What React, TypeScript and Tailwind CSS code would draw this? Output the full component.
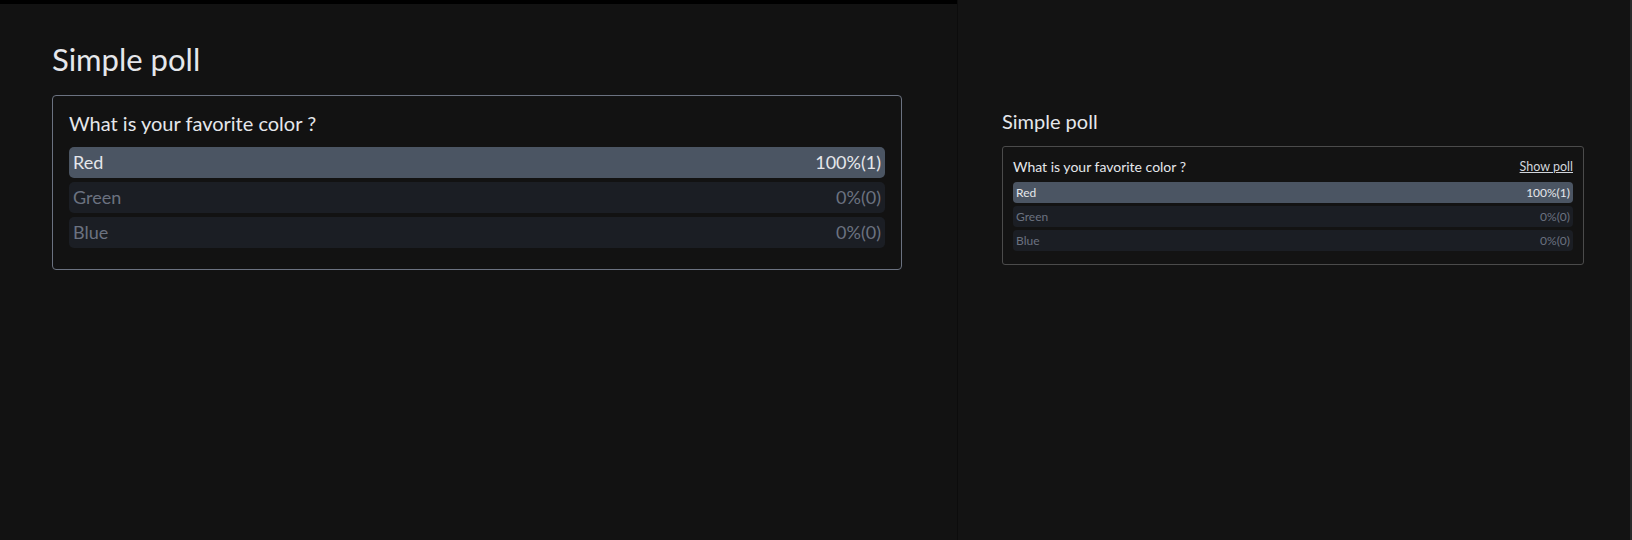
const options = [
  { label: 'Red', pct: '100%(1)', active: true },
  { label: 'Green', pct: '0%(0)', active: false },
  { label: 'Blue', pct: '0%(0)', active: false },
];

const font = { fontFamily: 'Lato, "Noto Sans", sans-serif' };

function Row({ label, pct, active, small }: { label: string; pct: string; active: boolean; small?: boolean }) {
  return (
    <div
      className={
        (small ? 'h-[21px] rounded-[4px] px-[3px] text-[12px] ' : 'h-[31px] rounded-[5px] px-[4px] text-[18px] ') +
        'flex items-center justify-between ' +
        (active ? 'bg-[#4b5563] text-[#e5e7eb]' : 'bg-[#1b1e24] text-[#6b7280]')
      }
    >
      <span>{label}</span>
      <span>{pct}</span>
    </div>
  );
}

export default function App() {
  return (
    <div className="flex h-[540px] w-full bg-[#121212] text-[#e5e7eb]" style={font}>
      <div className="w-[957px] shrink-0 border-t-4 border-black pl-[52px] pr-[55px] pt-[37px]">
        <h1 className="text-[31px] leading-[36px] font-normal">Simple poll</h1>
        <div className="mt-[18px] rounded-[4px] border border-[#6b7280] px-4 pt-[13px] pb-[21px]">
          <div className="text-[20px] leading-[28px] mb-[10px]">What is your favorite color ?</div>
          <div className="flex flex-col gap-1">
            {options.map((o) => (
              <Row key={o.label} {...o} />
            ))}
          </div>
        </div>
      </div>
      <div className="flex-1 border-l border-[#0c0c0c] border-r-2 border-r-[#2a2a2a] bg-[#131313] pl-[44px] pr-[46px] pt-[108px]">
        <h2 className="text-[20px] leading-[26px] font-normal">Simple poll</h2>
        <div className="mt-[12px] rounded-[3px] border border-[#4b4b4b] px-[10px] pt-[10px] pb-[13px]">
          <div className="flex items-center justify-between mb-[5px]">
            <span className="text-[14px] leading-[20px]">What is your favorite color ?</span>
            <a className="text-[12.5px] text-[#d1d5db] underline">Show poll</a>
          </div>
          <div className="flex flex-col gap-[3px]">
            {options.map((o) => (
              <Row key={o.label} {...o} small />
            ))}
          </div>
        </div>
      </div>
    </div>
  );
}
